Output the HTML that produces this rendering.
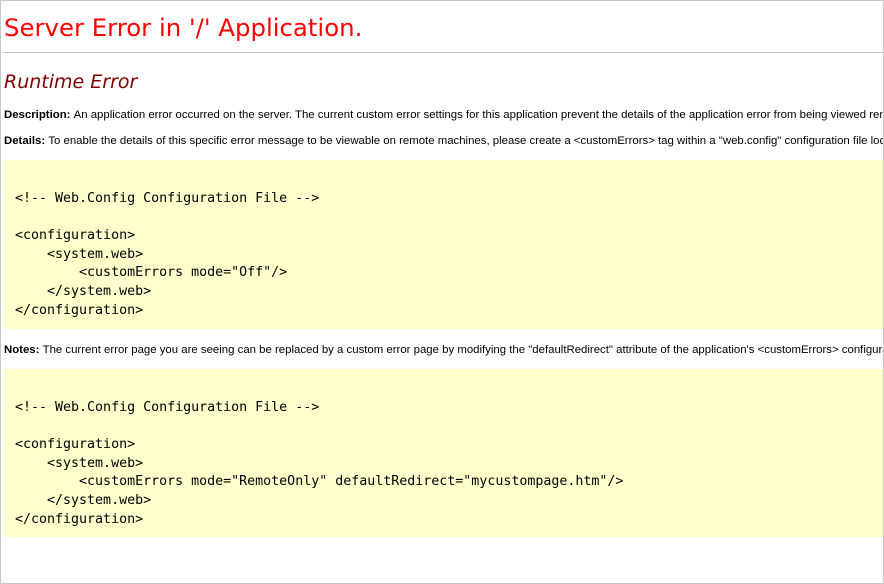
<!DOCTYPE html>
<html><head><meta charset="utf-8"><style>
html,body{margin:0;padding:0;background:#fff;}
.frame{position:absolute;left:0;top:0;width:882px;height:582px;border:1px solid #c8c8c8;overflow:hidden;}
h1{position:absolute;left:3px;top:12px;margin:0;font:normal 24.4px "DejaVu Sans",Verdana,sans-serif;color:#f00;white-space:nowrap;}
.hr{position:absolute;left:3px;right:0;top:51px;height:1px;background:#c0c0c0;}
h2{position:absolute;left:3px;top:70px;margin:0;font:italic normal 19px "DejaVu Sans",Verdana,sans-serif;color:#800000;white-space:nowrap;}
.t{position:absolute;left:3px;font:11.4px "Liberation Sans",Arial,sans-serif;color:#000;white-space:nowrap;}
.box{position:absolute;left:3px;right:0;background:#ffffcc;}
pre{position:absolute;left:11px;margin:0;font:13.3px/18.6px "DejaVu Sans Mono",Consolas,monospace;color:#000;}
</style></head><body><div class="frame">
<h1>Server Error in '/' Application.</h1>
<div class="hr"></div>
<h2>Runtime Error</h2>
<div class="t" style="top:108px"><b>Description: </b>An application error occurred on the server. The current custom error settings for this application prevent the details of the application error from being viewed remotely (for security reasons).</div>
<div class="t" style="top:134px"><b>Details: </b>To enable the details of this specific error message to be viewable on remote machines, please create a &lt;customErrors&gt; tag within a "web.config" configuration file located in the root directory.</div>
<div class="box" style="top:159px;height:169px"><pre style="top:30px">&lt;!-- Web.Config Configuration File --&gt;

&lt;configuration&gt;
    &lt;system.web&gt;
        &lt;customErrors mode="Off"/&gt;
    &lt;/system.web&gt;
&lt;/configuration&gt;</pre></div>
<div class="t" style="top:343px"><b>Notes: </b>The current error page you are seeing can be replaced by a custom error page by modifying the "defaultRedirect" attribute of the application's &lt;customErrors&gt; configuration tag.</div>
<div class="box" style="top:368px;height:168px"><pre style="top:30px">&lt;!-- Web.Config Configuration File --&gt;

&lt;configuration&gt;
    &lt;system.web&gt;
        &lt;customErrors mode="RemoteOnly" defaultRedirect="mycustompage.htm"/&gt;
    &lt;/system.web&gt;
&lt;/configuration&gt;</pre></div>
</div></body></html>
